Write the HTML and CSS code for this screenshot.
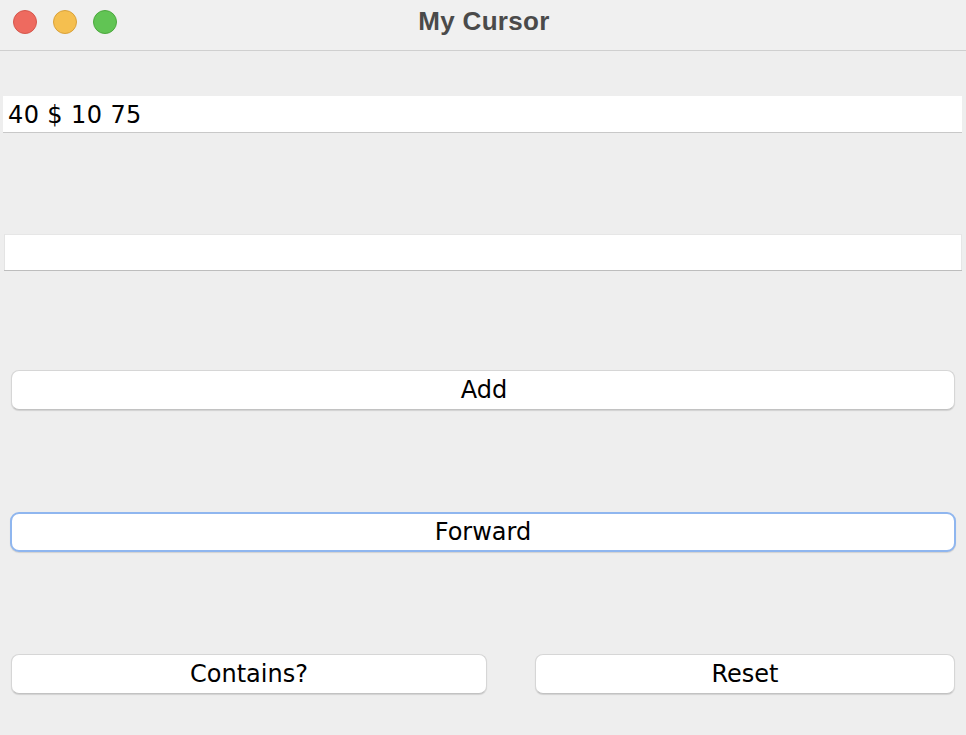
FILE: index.html
```html
<!DOCTYPE html>
<html>
<head>
<meta charset="utf-8">
<link rel="stylesheet" href="styles.css">
</head>
<body>
<div class="window">
  <div class="titlebar">
    <div class="lights">
      <span class="light red"></span>
      <span class="light yellow"></span>
      <span class="light green"></span>
    </div>
    <div class="title">My Cursor</div>
  </div>
  <div class="content">
    <div class="field field-first">40 $ 10 75</div>
    <div class="field field-second"></div>
    <button class="btn btn-add">Add</button>
    <button class="btn btn-forward">Forward</button>
    <div class="btn-row">
      <button class="btn btn-contains">Contains?</button>
      <button class="btn btn-reset">Reset</button>
    </div>
  </div>
</div>
</body>
</html>
```

FILE: styles.css
```css
html, body {
  margin: 0;
  padding: 0;
  width: 966px;
  height: 735px;
  overflow: hidden;
  background: #eeeeee;
}

.window {
  width: 966px;
  height: 735px;
  display: flex;
  flex-direction: column;
}

.titlebar {
  height: 50px;
  background: #f0f0f0;
  border-bottom: 1px solid #cfcfcf;
  position: relative;
  display: flex;
  align-items: center;
  justify-content: center;
}

.lights {
  position: absolute;
  left: 13px;
  top: 10px;
  display: flex;
  gap: 16px;
}

.light {
  width: 24px;
  height: 24px;
  border-radius: 50%;
  box-sizing: border-box;
}

.red { background: #ee6a5f; border: 1px solid #d5574c; }
.yellow { background: #f5bf4f; border: 1px solid #d9a13a; }
.green { background: #61c454; border: 1px solid #4ca83e; }

.title {
  font-family: "Liberation Sans", Arial, sans-serif;
  font-weight: bold;
  font-size: 26px;
  letter-spacing: 0.3px;
  color: #4a4a4a;
  margin-top: -8px;
  margin-left: 2px;
}

.content {
  flex: 1;
  display: flex;
  flex-direction: column;
  padding-top: 45px;
  font-family: "DejaVu Sans", Verdana, sans-serif;
}

.field {
  height: 36px;
  background: #ffffff;
  box-sizing: border-box;
  font-size: 24px;
  letter-spacing: 0.4px;
  line-height: 38px;
  color: #000;
  box-shadow: 0 1px 0 #c8c8c8;
}

.field-first {
  margin-left: 3px;
  width: 959px;
  padding-left: 5px;
}

.field-second {
  margin-top: 102px;
  margin-left: 4px;
  width: 958px;
  border-left: 1px solid #e4e4e4;
  border-top: 1px solid #e6e6e6;
  border-right: 1px solid #e6e6e6;
  box-shadow: 0 1px 0 #bdbdbd;
}

.btn {
  height: 40px;
  background: #ffffff;
  border: 1px solid #d6d6d6;
  border-bottom-color: #c2c2c2;
  border-radius: 8px;
  box-shadow: 0 1px 1px rgba(0,0,0,0.12);
  font-family: "DejaVu Sans", Verdana, sans-serif;
  font-size: 24px;
  color: #000;
  padding: 0;
  box-sizing: border-box;
}

.btn-add {
  margin-top: 100px;
  margin-left: 11px;
  width: 944px;
  padding-left: 2px;
}

.btn-forward {
  margin-top: 102px;
  margin-left: 10px;
  width: 946px;
  border: 2px solid #8fb6ef;
  border-radius: 9px;
}

.btn-row {
  margin-top: 102px;
  display: flex;
  gap: 48px;
  padding-left: 11px;
}

.btn-contains {
  width: 476px;
}

.btn-reset {
  width: 420px;
}
```
